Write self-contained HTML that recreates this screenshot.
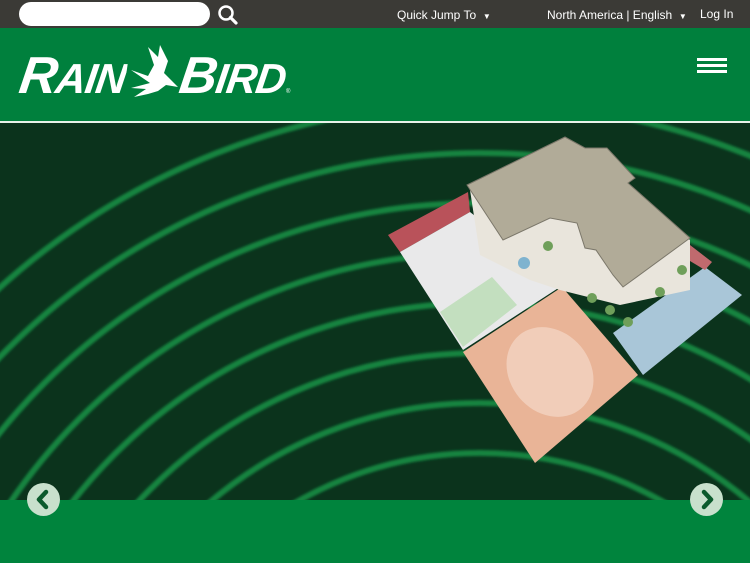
<!DOCTYPE html>
<html style="width:750px;height:563px;overflow:hidden"><head><style>
*{margin:0;padding:0;box-sizing:border-box}
body{width:750px;height:563px;overflow:hidden;font-family:"Liberation Sans",sans-serif;background:#00843d;position:relative}
.top{position:absolute;left:0;top:0;width:750px;height:28px;background:#3b3a36;color:#fff;font-size:12px}
.search{position:absolute;left:19px;top:2px;width:191px;height:24px;background:#fff;border-radius:12px}
.top span{position:absolute;top:8px;white-space:nowrap}
.hdr{position:absolute;left:0;top:28px;width:750px;height:93px;background:#00803d}
.line{position:absolute;left:0;top:121px;width:750px;height:2px;background:#e8f3ea}
.hero{position:absolute;left:0;top:123px;width:750px;height:377px;background:#0b331c;overflow:hidden}
.logo{position:absolute;color:#fff;font-weight:bold;font-style:italic;white-space:nowrap;transform:skewX(-8deg);letter-spacing:-1px;height:42px;overflow:hidden}
.logo b{font-size:52px;line-height:42px}
.logo i{font-size:42px;line-height:42px;font-style:italic}
.arrow{position:absolute;top:483px;width:33px;height:33px;border-radius:50%;background:#c8e0cc}
</style></head><body>
<div class="top">
<div class="search"></div>
<svg style="position:absolute;left:217px;top:4px" width="22" height="22" viewBox="0 0 22 22"><circle cx="9" cy="9" r="6.5" fill="none" stroke="#fff" stroke-width="2.5"/><path d="M13.5 13.5L19 19" stroke="#fff" stroke-width="3.2" stroke-linecap="round"/></svg>
<span style="left:397px">Quick Jump To&nbsp;&nbsp;<small style="font-size:8px">▼</small></span>
<span style="left:547px">North America | English&nbsp;&nbsp;<small style="font-size:8px">▼</small></span>
<span style="left:700px;top:7px">Log In</span>
</div>
<div class="hdr">
<svg style="position:absolute;left:697px;top:30px" width="30" height="16"><rect y="0" width="30" height="3" fill="#fff"/><rect y="6" width="30" height="3" fill="#fff"/><rect y="12" width="30" height="3" fill="#fff"/></svg>
</div>
<div class="logo" style="left:20px;top:55px"><b>R</b><i>AIN</i></div>
<svg style="position:absolute;left:128px;top:43px" width="56" height="56" viewBox="0 0 56 56"><path d="M3 27 L20 33 L26 22 L20 4 L30 14 L32 2 L40 18 L36 30 L44 38 L50 44 L38 42 L30 48 L20 51 L6 54 L18 46 L3 45 L22 40 Z" fill="#fff"/></svg>
<div class="logo" style="left:180px;top:55px"><b>B</b><i>IRD</i></div>
<div style="position:absolute;left:286px;top:89px;color:#fff;font-size:6px;line-height:6px">®</div>
<div class="line"></div>
<div class="hero">
<svg width="750" height="377" viewBox="0 123 750 377">
<defs><filter id="b"><feGaussianBlur stdDeviation="1.2"/></filter></defs>
<g fill="none" stroke="#14843f" stroke-width="6" filter="url(#b)">
<circle cx="480" cy="820" r="717"/><circle cx="480" cy="820" r="667"/><circle cx="480" cy="820" r="617"/><circle cx="480" cy="820" r="567"/><circle cx="480" cy="820" r="517"/><circle cx="480" cy="820" r="467"/><circle cx="480" cy="820" r="417"/><circle cx="480" cy="820" r="367"/>
</g>
<polygon points="388,235 468,192 470,212 400,252" fill="#b9525a"/>
<polygon points="400,252 470,212 563,285 463,350" fill="#e9e9ea"/>
<polygon points="440,312 492,277 517,305 463,347" fill="#c3dfbf"/>
<polygon points="463,352 562,287 638,375 535,463" fill="#e9b497"/>
<ellipse cx="550" cy="372" rx="40" ry="48" fill="#f1cdb9" transform="rotate(-40 550 372)"/>
<polygon points="613,333 705,267 742,295 643,375" fill="#a9c6d8"/>
<polygon points="690,245 712,262 705,270 685,258" fill="#c06a6e"/>
<polygon points="470,190 560,150 690,240 690,290 620,305 560,290 530,280 480,255" fill="#e9e5dc"/>
<polygon points="467,185 565,137 585,148 607,148 635,178 628,183 690,238 623,287 613,275 596,250 585,248 577,223 550,218 503,240" fill="#b1ab98" stroke="#7b776a" stroke-width="1"/>
<g fill="#6f9f5a"><circle cx="548" cy="246" r="5"/><circle cx="592" cy="298" r="5"/><circle cx="610" cy="310" r="5"/><circle cx="628" cy="322" r="5"/><circle cx="660" cy="292" r="5"/><circle cx="682" cy="270" r="5"/></g>
<circle cx="524" cy="263" r="6" fill="#7fb3cf"/>
</svg>
</div>
<div class="arrow" style="left:27px"><svg width="33" height="33"><path d="M19 9 L12 16.5 L19 24" fill="none" stroke="#0b5a2c" stroke-width="4.5" stroke-linecap="round" stroke-linejoin="round"/></svg></div>
<div class="arrow" style="left:690px"><svg width="33" height="33"><path d="M14 9 L21 16.5 L14 24" fill="none" stroke="#0b5a2c" stroke-width="4.5" stroke-linecap="round" stroke-linejoin="round"/></svg></div>
</body></html>
